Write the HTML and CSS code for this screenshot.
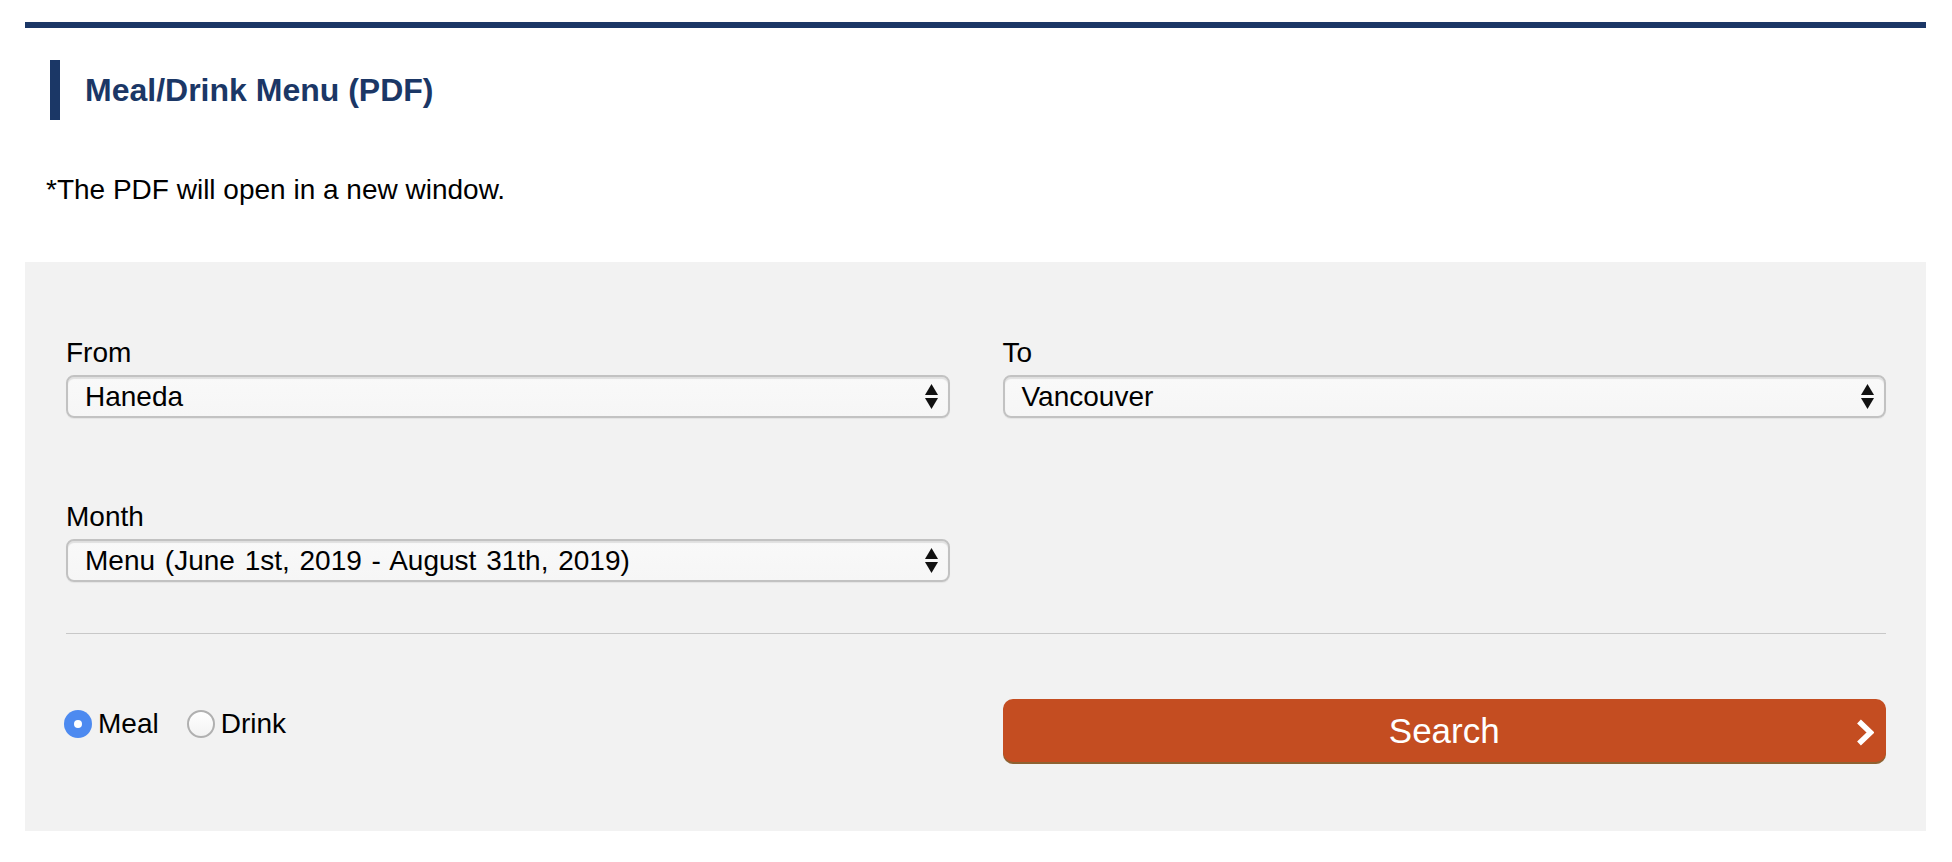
FILE: index.html
```html
<!DOCTYPE html>
<html lang="en">
<head>
<meta charset="utf-8">
<title>Meal/Drink Menu (PDF)</title>
<link rel="stylesheet" href="styles.css">
</head>
<body>
<div class="page">
  <div class="topbar"></div>
  <h2 class="heading">Meal/Drink Menu (PDF)</h2>
  <p class="note">*The PDF will open in a new window.</p>
  <div class="panel">
    <div class="grid">
      <div class="field">
        <div class="label">From</div>
        <div class="select"><span class="select-text">Haneda</span>
          <svg class="arrows" width="13" height="25" viewBox="0 0 13 25"><polygon points="6.5,0 13,11 0,11" fill="#111"/><polygon points="0,14 13,14 6.5,25" fill="#111"/></svg>
        </div>
      </div>
      <div class="field">
        <div class="label">To</div>
        <div class="select"><span class="select-text">Vancouver</span>
          <svg class="arrows" width="13" height="25" viewBox="0 0 13 25"><polygon points="6.5,0 13,11 0,11" fill="#111"/><polygon points="0,14 13,14 6.5,25" fill="#111"/></svg>
        </div>
      </div>
      <div class="field row2">
        <div class="label">Month</div>
        <div class="select"><span class="select-text wide">Menu (June 1st, 2019 - August 31th, 2019)</span>
          <svg class="arrows" width="13" height="25" viewBox="0 0 13 25"><polygon points="6.5,0 13,11 0,11" fill="#111"/><polygon points="0,14 13,14 6.5,25" fill="#111"/></svg>
        </div>
      </div>
    </div>
    <hr class="divider">
    <div class="grid bottom">
      <div class="radios">
        <label class="radio"><span class="dot checked"></span><span>Meal</span></label>
        <label class="radio"><span class="dot"></span><span>Drink</span></label>
      </div>
      <button class="search" type="button">Search
        <svg class="chev" width="18" height="27" viewBox="0 0 18 27"><polyline points="3,2.5 14.5,13.5 3,24.5" fill="none" stroke="#fff" stroke-width="5.5" stroke-linejoin="miter"/></svg>
      </button>
    </div>
  </div>
</div>
</body>
</html>
```

FILE: styles.css
```css
* { box-sizing: border-box; }
html, body { margin: 0; padding: 0; background: #fff; }
body {
  font-family: "Liberation Sans", Arial, Helvetica, sans-serif;
  color: #000;
}
.page {
  margin-left: 25px;
  width: 1901px;
  padding-top: 22px;
  padding-bottom: 29px;
}
.topbar {
  height: 6px;
  background: #1b3766;
}
.heading {
  margin: 32px 0 0 25px;
  height: 60px;
  line-height: 60px;
  border-left: 10px solid #1b3766;
  padding-left: 25px;
  font-size: 32px;
  font-weight: bold;
  color: #1b3766;
}
.note {
  margin: 53px 0 0 21px;
  font-size: 28px;
  line-height: 34px;
}
.panel {
  margin-top: 55px;
  background: #f2f2f2;
  padding: 74px 40px 69px 41px;
}
.grid {
  display: grid;
  grid-template-columns: 1fr 1fr;
  column-gap: 53px;
}
.row2 { margin-top: 82px; }
.label {
  font-size: 28px;
  line-height: 34px;
  margin-bottom: 5px;
}
.select {
  height: 43px;
  display: flex;
  align-items: center;
  justify-content: space-between;
  padding: 0 10px 0 17px;
  border: 2px solid #c2c2c2;
  border-radius: 8px;
  background: linear-gradient(#f9f9f9, #f6f6f6);
  box-shadow: inset 0 2px 1px rgba(0,0,0,0.10), 0 1px 1px rgba(0,0,0,0.06);
}
.select-text {
  font-size: 28px;
  line-height: 34px;
  color: #000;
}
.select-text.wide { word-spacing: 2px; }
.arrows { display: block; }
.divider {
  margin: 51px 0 0 0;
  border: 0;
  height: 1px;
  background: #c8c8c8;
}
.bottom { margin-top: 65px; }
.radios {
  display: flex;
  align-items: center;
  height: 34px;
  margin-top: 8px;
  margin-left: -2px;
}
.radio {
  display: flex;
  align-items: center;
  font-size: 28px;
  line-height: 34px;
  margin-right: 28px;
}
.dot {
  width: 28px;
  height: 28px;
  border-radius: 50%;
  margin-right: 6px;
  background: linear-gradient(#ffffff, #f3f3f3);
  border: 2px solid #b0b0b0;
  position: relative;
}
.dot.checked {
  background: #4d8af0;
  border: 0;
}
.dot.checked::after {
  content: "";
  position: absolute;
  left: 10px;
  top: 10px;
  width: 8px;
  height: 8px;
  border-radius: 50%;
  background: #fff;
}
.search {
  position: relative;
  height: 63px;
  border: 0;
  border-radius: 10px;
  background: #c44d21;
  box-shadow: 0 2px 0 #8e6232;
  color: #fff;
  font-family: "Liberation Sans", Arial, Helvetica, sans-serif;
  font-size: 35px;
  line-height: 63px;
  padding: 0;
  text-align: center;
}
.chev {
  position: absolute;
  right: 12px;
  top: 20px;
}
```
